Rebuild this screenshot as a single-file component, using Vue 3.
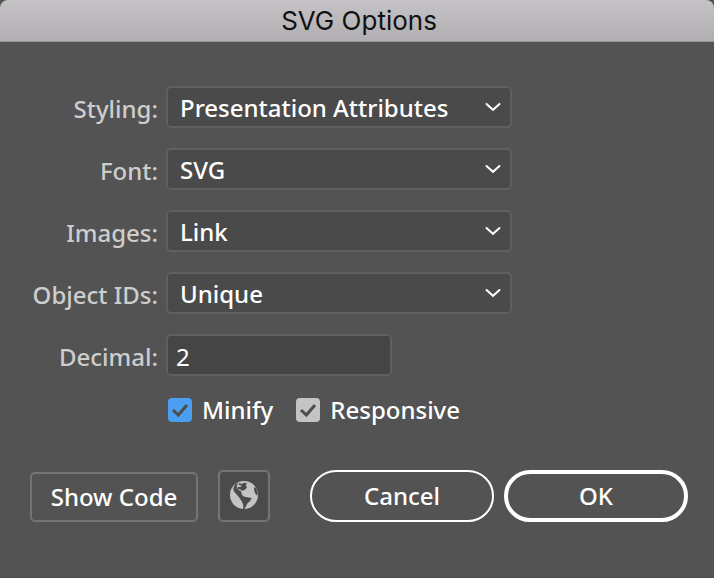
<template>
  <form class="dialog" @submit.prevent>
    <header class="title-bar">
      <h1>SVG Options</h1>
    </header>

    <div class="fields">
      <div v-for="field in fields" :key="field.id" class="row">
        <label :for="field.id">{{ field.label }}:</label>
        <div class="select">
          <select :id="field.id" v-model="field.value">
            <option v-for="option in field.options" :key="option">{{ option }}</option>
          </select>
          <svg class="arrow" viewBox="0 0 16 10" aria-hidden="true">
            <path d="M1.5 2 L8 7.8 L14.5 2" />
          </svg>
        </div>
      </div>

      <div class="row">
        <label for="decimal">Decimal:</label>
        <input id="decimal" v-model="decimal" class="number" type="text" />
      </div>

      <div class="checks">
        <label class="check">
          <input v-model="minify" type="checkbox" class="blue" />
          <svg viewBox="0 0 24 24" aria-hidden="true"><path d="M5 12 L10.3 17 L19 7" /></svg>
          <span>Minify</span>
        </label>
        <label class="check">
          <input v-model="responsive" type="checkbox" />
          <svg viewBox="0 0 24 24" aria-hidden="true"><path d="M5 12 L10.3 17 L19 7" /></svg>
          <span>Responsive</span>
        </label>
      </div>
    </div>

    <footer class="actions">
      <button type="button" class="code">Show Code</button>
      <button type="button" class="preview" aria-label="Preview in browser">
        <svg viewBox="0 0 84 84" aria-hidden="true">
          <circle cx="42" cy="42" r="42" fill="#c4c4c4" />
          <g fill="#4b4b4b">
            <path
              d="M16 9 L24 5 L21 13 L20 22 L27 27 L33 31 L35 39 L40 47 L38 54 L42 64 L46 72 L44 84 L39 84 L40 74 L36 62 L28 50 L18 38 L11 30 L10 22 Z"
            />
            <path d="M26 6 L35 9 L42 5 L50 6 L48 14 L51 20 L44 27 L36 29 L29 24 L22 25 L23 18 L32 18 L35 14 L27 12 Z" />
            <path d="M34 44 L48 48 L65 51 L60 61 L53 66 L46 80 L42 66 L36 55 Z" />
            <path d="M73 17 L78 22 L83 34 L82 44 L76 38 L72 27 Z" />
          </g>
        </svg>
      </button>
      <div class="confirm">
        <button type="button" class="pill">Cancel</button>
        <button type="submit" class="pill primary">OK</button>
      </div>
    </footer>
  </form>
</template>

<script setup>
import { ref } from "vue";

const fields = ref([
  {
    id: "styling",
    label: "Styling",
    value: "Presentation Attributes",
    options: ["Presentation Attributes", "Internal CSS", "Inline Style"],
  },
  { id: "font", label: "Font", value: "SVG", options: ["SVG", "Convert To Outlines"] },
  { id: "images", label: "Images", value: "Link", options: ["Preserve", "Embed", "Link"] },
  {
    id: "object-ids",
    label: "Object IDs",
    value: "Unique",
    options: ["Layer Names", "Minimal", "Unique"],
  },
]);

const decimal = ref("2");
const minify = ref(true);
const responsive = ref(true);
</script>

<style>
body {
  background: #535353;
}
</style>

<style scoped>
.dialog {
  display: flex;
  flex-direction: column;
  min-height: 100vh;
  box-sizing: border-box;
  border-bottom: 1px solid #4a464a;
  color: #fff;
  font-family: "Noto Sans", sans-serif;
  font-size: 24px;
  font-weight: 500;
  line-height: 32px;
}

.title-bar {
  padding: 5px 0 4px 4px;
  border-bottom: 1px solid #979597;
  border-radius: 8px 8px 0 0;
  background: linear-gradient(#c5c3c6, #b0aeb0);
  text-align: center;
}

.title-bar h1 {
  margin: 0;
  color: #111;
  font-family: Inter, sans-serif;
  font-size: 26px;
  font-weight: 400;
  line-height: 32px;
}

.fields {
  display: flex;
  flex-direction: column;
  gap: 20px;
  padding: 44px 26px 0 24px;
}

.row {
  display: grid;
  grid-template-columns: 134px minmax(0, 346px);
  gap: 8px;
  align-items: center;
}

.row > label {
  padding-top: 3px;
  color: #cdcdcd;
  text-align: right;
}

.select {
  display: grid;
  align-items: center;
}

.select > * {
  grid-area: 1 / 1;
}

select,
.number {
  box-sizing: border-box;
  width: 100%;
  height: 42px;
  margin: 0;
  border: 2px solid #5f5f5f;
  border-radius: 5px;
  outline: none;
  color: #fff;
  font: inherit;
}

select {
  appearance: none;
  padding: 2px 40px 0 12px;
  background: #4a4a4a;
}

.arrow {
  justify-self: end;
  width: 16px;
  height: 10px;
  margin-right: 11px;
  pointer-events: none;
}

.arrow path {
  fill: none;
  stroke: #fff;
  stroke-width: 2;
  stroke-linecap: round;
}

.number {
  max-width: 226px;
  padding: 2px 8px 0;
  background: #454545;
  font-weight: 400;
}

.checks {
  display: flex;
  gap: 23px;
  padding-left: 144px;
  line-height: 28px;
}

.check {
  display: grid;
  grid-template-columns: 24px auto;
  column-gap: 10px;
  align-items: center;
}

.check input {
  grid-area: 1 / 1;
  appearance: none;
  width: 24px;
  height: 24px;
  margin: 0;
  border-radius: 4px;
  background: #c4c4c4;
}

.check input.blue {
  background: #4b9ff0;
}

.check svg {
  grid-area: 1 / 1;
  width: 24px;
  height: 24px;
  visibility: hidden;
  pointer-events: none;
}

.check input:checked + svg {
  visibility: visible;
}

.check path {
  fill: none;
  stroke: #4d4d4d;
  stroke-width: 3;
}

.actions {
  display: flex;
  align-items: flex-end;
  gap: 20px;
  padding: 46px 26px 54px 30px;
}

button {
  box-sizing: border-box;
  height: 52px;
  padding: 0;
  border: 2px solid #747474;
  border-radius: 5px;
  background: transparent;
  color: #fff;
  font: inherit;
}

.code {
  width: 168px;
  height: 50px;
}

.preview {
  display: grid;
  place-items: center;
  width: 52px;
  background: #4b4b4b;
}

.preview svg {
  width: 28px;
  height: 28px;
  margin-bottom: 2px;
}

.confirm {
  display: flex;
  gap: 10px;
  margin-left: auto;
}

.pill {
  width: 184px;
  border-color: #fff;
  border-radius: 26px;
}

.pill.primary {
  border-width: 4px;
}
</style>
